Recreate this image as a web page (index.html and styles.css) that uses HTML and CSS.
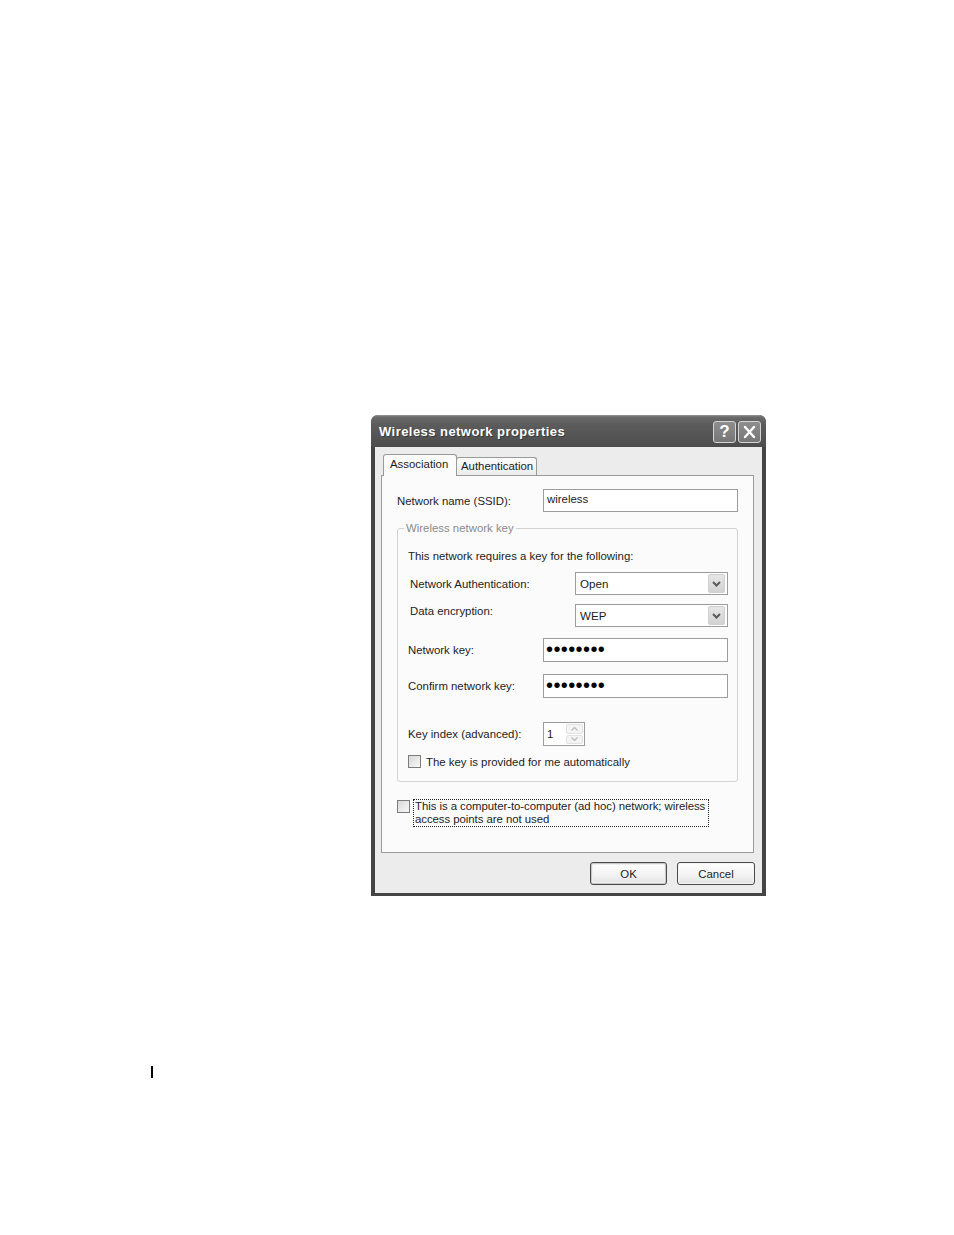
FILE: index.html
```html
<!DOCTYPE html>
<html>
<head>
<meta charset="utf-8">
<title>Wireless network properties</title>
<link rel="stylesheet" href="styles.css">
</head>
<body>
<div class="page">
  <div class="dialog">
    <div class="titlebar">
      <span class="title">Wireless network properties</span>
      <div class="tbtns">
        <span class="tbtn help">?</span>
        <span class="tbtn close"><svg width="21" height="20" viewBox="0 0 21 20"><path d="M6 5 L15 15 M15 5 L6 15" stroke="#fff" stroke-width="2.4" stroke-linecap="round" fill="none"/></svg></span>
      </div>
    </div>
    <div class="frame">
      <div class="client">
        <div class="tabs">
          <div class="tab active">Association</div>
          <div class="tab">Authentication</div>
        </div>
        <div class="panel">
          <div class="row ssid">
            <span class="lbl w146">Network name (SSID):</span>
            <div class="edit w195">wireless</div>
          </div>
          <fieldset class="group">
            <legend>Wireless network key</legend>
            <div class="intro">This network requires a key for the following:</div>
            <div class="row r-auth">
              <span class="lbl indent">Network Authentication:</span>
              <div class="combo">Open<span class="drop"><svg width="9" height="6" viewBox="0 0 9 6"><path d="M1 1 L4.5 4.5 L8 1" stroke="#5a5a5a" stroke-width="2" fill="none"/></svg></span></div>
            </div>
            <div class="row r-enc">
              <span class="lbl indent">Data encryption:</span>
              <div class="combo">WEP<span class="drop"><svg width="9" height="6" viewBox="0 0 9 6"><path d="M1 1 L4.5 4.5 L8 1" stroke="#5a5a5a" stroke-width="2" fill="none"/></svg></span></div>
            </div>
            <div class="row r-key">
              <span class="lbl w135">Network key:</span>
              <div class="edit w185 pwd">••••••••</div>
            </div>
            <div class="row r-confirm">
              <span class="lbl w135">Confirm network key:</span>
              <div class="edit w185 pwd">••••••••</div>
            </div>
            <div class="row r-index">
              <span class="lbl w135">Key index (advanced):</span>
              <div class="spin">
                <span class="spin-val">1</span>
                <span class="spin-btns">
                  <span class="sb"><svg width="7" height="4" viewBox="0 0 7 4"><path d="M0.5 3.5 L3.5 0.5 L6.5 3.5" stroke="#bdbdbd" stroke-width="1.3" fill="none"/></svg></span>
                  <span class="sb"><svg width="7" height="4" viewBox="0 0 7 4"><path d="M0.5 0.5 L3.5 3.5 L6.5 0.5" stroke="#bdbdbd" stroke-width="1.3" fill="none"/></svg></span>
                </span>
              </div>
            </div>
            <div class="row r-check">
              <span class="check"></span>
              <span class="check-text">The key is provided for me automatically</span>
            </div>
          </fieldset>
          <div class="adhoc">
            <span class="check"></span>
            <span class="focus">This is a computer-to-computer (ad hoc) network; wireless<br>access points are not used</span>
          </div>
        </div>
        <div class="buttons">
          <button class="btn default">OK</button>
          <button class="btn">Cancel</button>
        </div>
      </div>
    </div>
  </div>
</div>
<div class="gutter-mark"></div>
</body>
</html>
```

FILE: styles.css
```css
html, body {
  margin: 0;
  padding: 0;
  background: #ffffff;
}

body {
  font-family: "Liberation Sans", Arial, sans-serif;
  font-size: 11.4px;
  color: #1c1c1c;
}

.page {
  padding: 415px 0 0 371px;
}

.dialog {
  width: 395px;
  background: #454545;
  border-radius: 7px 7px 0 0;
}

.titlebar {
  height: 32px;
  box-sizing: border-box;
  display: flex;
  align-items: center;
  padding: 1px 5px 0 8px;
  border-radius: 7px 7px 0 0;
  background: linear-gradient(#9a9a9a 0, #6a6a6a 2px, #5c5c5c 30%, #525252 75%, #4c4c4c 100%);
}

.title {
  color: #ffffff;
  font-weight: bold;
  font-size: 13px;
  letter-spacing: 0.45px;
  text-shadow: 1px 1px 0 #3a3a3a;
}

.tbtns {
  margin-left: auto;
  display: flex;
  gap: 2px;
}

.tbtn {
  width: 23px;
  height: 22px;
  box-sizing: border-box;
  border: 1px solid #d4d4d4;
  border-radius: 3px;
  background: linear-gradient(#8e8e8e, #767676);
  display: flex;
  align-items: center;
  justify-content: center;
  color: #ffffff;
}

.help {
  font-family: "Liberation Sans", Arial, sans-serif;
  font-weight: bold;
  font-size: 17px;
  line-height: 20px;
}

.frame {
  padding: 0 4px 3px;
}

.client {
  height: 446px;
  box-sizing: border-box;
  background: #ececec;
  padding: 7px 7px 8px 6px;
  display: flex;
  flex-direction: column;
}

.tabs {
  display: flex;
  align-items: flex-end;
  height: 21px;
}

.tab {
  box-sizing: border-box;
  height: 18px;
  width: 81px;
  border: 1px solid #9a9a9a;
  border-bottom: none;
  border-radius: 3px 3px 0 0;
  background: linear-gradient(#fbfbfb, #ececec);
  padding-left: 4px;
  line-height: 17px;
  white-space: nowrap;
}

.tab.active {
  position: relative;
  z-index: 1;
  width: 74px;
  height: 22px;
  margin-left: 2px;
  margin-bottom: -1px;
  margin-right: -1px;
  background: #fbfbfb;
  border-color: #9a9a9a;
  padding-left: 6px;
  line-height: 19px;
}

.panel {
  height: 378px;
  box-sizing: border-box;
  border: 1px solid #9a9a9a;
  background: #fbfbfb;
  margin-right: 1px;
  padding: 13px 15px 0 15px;
}

.row {
  display: flex;
  align-items: center;
}

.lbl {
  flex: none;
  white-space: nowrap;
  line-height: 14px;
}

.w146 { width: 146px; }
.w135 { width: 135px; }
.indent { margin-left: 2px; width: 165px; }

.edit {
  box-sizing: border-box;
  height: 23px;
  border: 1px solid #9c9c9c;
  background: #ffffff;
  padding-left: 3px;
  line-height: 19px;
  white-space: nowrap;
}

.w195 { width: 195px; }
.w185 { width: 185px; height: 24px; }

.pwd {
  font-size: 20px;
  line-height: 21px;
  letter-spacing: 0.4px;
  color: #000;
  padding-left: 2px;
}

.group {
  margin: 9px 0 0 0;
  width: 341px;
  box-sizing: border-box;
  border: 1px solid #d2d2d2;
  border-radius: 3px;
  padding: 14px 9px 13px 10px;
  min-width: 0;
}

.group legend {
  margin-left: -4px;
  padding: 0 2px 0 2px;
  line-height: 14px;
  color: #8a8a8a;
}

.intro {
  line-height: 14px;
  white-space: nowrap;
}

.r-auth { margin-top: 9px; height: 23px; }
.r-enc { margin-top: 9px; height: 23px; align-items: flex-start; }
.r-key { margin-top: 11px; height: 24px; }
.r-confirm { margin-top: 12px; height: 24px; }
.r-index { margin-top: 24px; height: 24px; }
.r-check { margin-top: 9px; height: 13px; }

.combo {
  box-sizing: border-box;
  width: 153px;
  height: 23px;
  border: 1px solid #9c9c9c;
  background: #ffffff;
  padding: 0 2px 0 4px;
  display: flex;
  align-items: center;
  font-size: 11.6px;
}

.drop {
  margin-left: auto;
  width: 17px;
  height: 19px;
  box-sizing: border-box;
  border: 1px solid #cfcfcf;
  border-radius: 2px;
  background: linear-gradient(#e6e6e6, #d2d2d2);
  display: flex;
  align-items: center;
  justify-content: center;
}

.spin {
  box-sizing: border-box;
  width: 42px;
  height: 24px;
  border: 1px solid #9c9c9c;
  background: #ffffff;
  display: flex;
  padding: 1px;
}

.spin-val {
  flex: 1;
  padding-left: 2px;
  line-height: 20px;
}

.spin-btns {
  width: 17px;
  display: flex;
  flex-direction: column;
  gap: 1px;
}

.sb {
  flex: 1;
  box-sizing: border-box;
  border: 1px solid #e2e2e2;
  border-radius: 2px;
  background: #f4f4f4;
  display: flex;
  align-items: center;
  justify-content: center;
}

.check {
  flex: none;
  width: 13px;
  height: 13px;
  box-sizing: border-box;
  border: 1px solid #7c7c7c;
  background: linear-gradient(135deg, #d8d8d8, #f8f8f8);
}

.check-text {
  margin-left: 5px;
  line-height: 14px;
  white-space: nowrap;
}

.adhoc {
  margin-top: 17px;
  display: flex;
  align-items: flex-start;
}

.adhoc .check {
  margin-top: 1px;
}

.focus {
  margin-left: 3px;
  width: 296px;
  box-sizing: border-box;
  border: 1px dotted #222;
  padding: 0 1px;
  line-height: 13px;
  letter-spacing: -0.05px;
  white-space: nowrap;
}

.buttons {
  margin-top: 9px;
  display: flex;
  justify-content: flex-end;
  gap: 10px;
}

.btn {
  font-family: "Liberation Sans", Arial, sans-serif;
  font-size: 11.4px;
  color: #1c1c1c;
  height: 23px;
  box-sizing: border-box;
  border: 1px solid #4a4a4a;
  border-radius: 3px;
  background: linear-gradient(#ffffff, #f2f2f2 60%, #e2e2e2);
  box-shadow: inset 0 0 0 1px #f4f4f4;
  padding: 0;
  width: 78px;
}

.btn.default {
  width: 77px;
  box-shadow: inset 0 0 0 1px #c8c8c8, inset 0 0 0 2px #efefef;
}

.gutter-mark {
  margin: 170px 0 0 151px;
  width: 2px;
  height: 12px;
  background: #000;
}
```
